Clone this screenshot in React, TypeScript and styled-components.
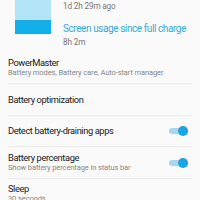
import styled, { createGlobalStyle } from 'styled-components'

const GlobalStyle = createGlobalStyle`
  html, body {
    margin: 0;
    padding: 0;
    background: #fafafa;
    font-family: Roboto, "Noto Sans", sans-serif;
    overflow: hidden;
  }
`

const Page = styled.div`
  width: 200px;
  height: 200px;
  overflow: hidden;
`

const Usage = styled.div`
  display: flex;
  gap: 12px;
  padding-left: 15px;
  height: 53px;
`

const Bar = styled.div`
  display: flex;
  flex-direction: column;
  width: 36px;
`

const BarPart = styled.div<{ $h: number; $color: string }>`
  height: ${({ $h }) => $h}px;
  background: ${({ $color }) => $color};
`

const UsageText = styled.div`
  display: flex;
  flex-direction: column;
  white-space: nowrap;
`

const Muted = styled.div<{ $top?: number }>`
  font-size: 8.2px;
  letter-spacing: -0.15px;
  line-height: 12px;
  color: #767676;
  margin-top: ${({ $top = 0 }) => $top}px;
`

const Highlight = styled.div`
  font-size: 10px;
  letter-spacing: -0.42px;
  line-height: 12px;
  color: #38aad5;
  margin-top: 11px;
`

const List = styled.div`
  display: flex;
  flex-direction: column;
`

const Row = styled.div<{ $h: number; $last?: boolean }>`
  display: flex;
  align-items: ${({ $last }) => ($last ? 'flex-start' : 'center')};
  justify-content: space-between;
  height: ${({ $h }) => $h}px;
  padding-top: ${({ $last }) => ($last ? 5 : 0)}px;
  margin: 0 8px;
  border-bottom: ${({ $last }) => ($last ? 'none' : '1px solid #ebebeb')};
  white-space: nowrap;
`

const Texts = styled.div`
  display: flex;
  flex-direction: column;
`

const Title = styled.div`
  font-size: 9.3px;
  letter-spacing: -0.4px;
  line-height: 10px;
  color: #202020;
`

const Sub = styled.div`
  font-size: 7.5px;
  letter-spacing: -0.1px;
  line-height: 10px;
  color: #878787;
`

const Toggle = styled.div`
  position: relative;
  width: 19px;
  height: 6px;
  border-radius: 3px;
  background: #a5d9f1;
  margin-right: 4px;

  &::after {
    content: '';
    position: absolute;
    right: 0;
    top: -2px;
    width: 10px;
    height: 10px;
    border-radius: 50%;
    background: #1ba5e6;
  }
`

export default function App() {
  return (
    <Page>
      <GlobalStyle />
      <Usage>
        <Bar>
          <BarPart $h={20} $color="#b4e4f7" />
          <BarPart $h={14} $color="#12afe9" />
        </Bar>
        <UsageText>
          <Muted>1d 2h 29m ago</Muted>
          <Highlight>Screen usage since full charge</Highlight>
          <Muted $top={1}>8h 2m</Muted>
        </UsageText>
      </Usage>
      <List>
        <Row $h={30}>
          <Texts>
            <Title>PowerMaster</Title>
            <Sub>Battery modes, Battery care, Auto-start manager</Sub>
          </Texts>
        </Row>
        <Row $h={31}>
          <Title>Battery optimization</Title>
        </Row>
        <Row $h={30}>
          <Title>Detect battery-draining apps</Title>
          <Toggle />
        </Row>
        <Row $h={31}>
          <Texts>
            <Title>Battery percentage</Title>
            <Sub>Show battery percentage in status bar</Sub>
          </Texts>
          <Toggle />
        </Row>
        <Row $h={20} $last>
          <Texts>
            <Title>Sleep</Title>
            <Sub>30 seconds</Sub>
          </Texts>
        </Row>
      </List>
    </Page>
  )
}
